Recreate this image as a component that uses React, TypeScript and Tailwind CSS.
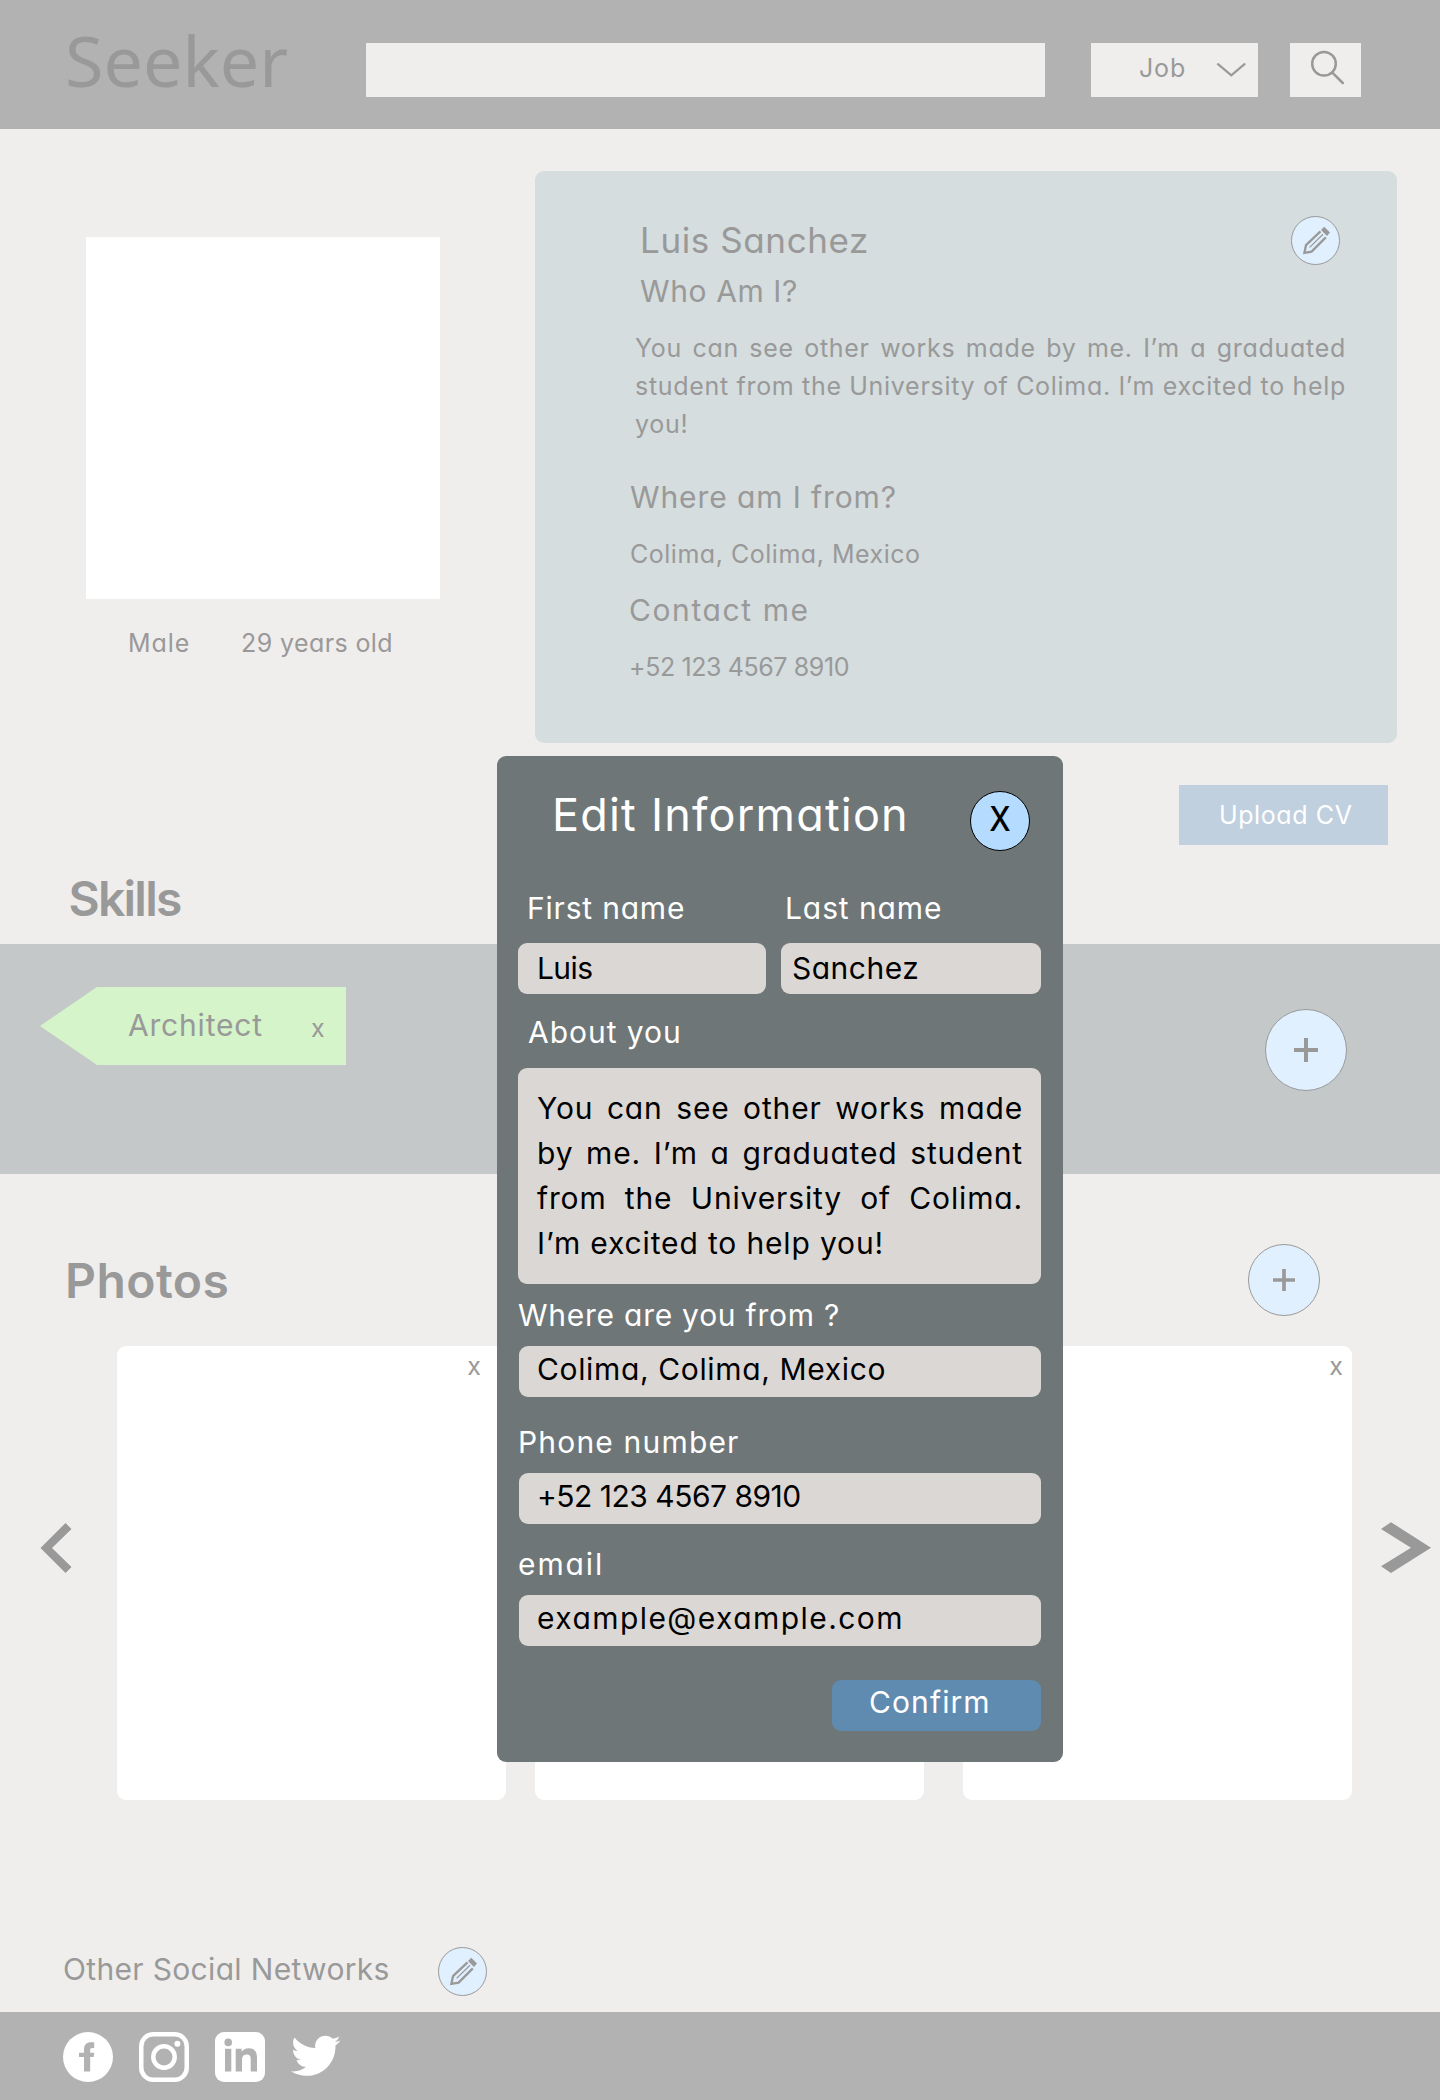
import type { ReactNode } from "react";
import { FaTwitter } from "react-icons/fa";

function Pencil() {
  return (
    <span className="flex size-[49px] shrink-0 items-center justify-center rounded-full border border-[#999999] bg-[#e0f0ff]">
      <svg width="49" height="49" viewBox="0 0 49 49" className="shrink-0" fill="none" stroke="#999999">
        <path d="M29.5 15.4 15 29.2 13.4 36.8 20.6 35.6 34.8 21.4" strokeWidth="2.3" />
        <path d="M18.6 31.4 32 18.2" strokeWidth="1.3" />
        <path d="M33.2 10.8 39 16.6 36 20 30 14Z" fill="#999999" stroke="none" />
      </svg>
    </span>
  );
}

function Plus({ size, className }: { size: number; className: string }) {
  return (
    <span className={`flex shrink-0 items-center justify-center rounded-full border border-[#999999] bg-[#e0f0ff] ${className}`}>
      <svg width={size} height={size} viewBox="0 0 24 24" stroke="#999999" strokeWidth="4" fill="none">
        <path d="M12 0V24M0 12H24" />
      </svg>
    </span>
  );
}

function Field({ className, children }: { className: string; children: ReactNode }) {
  return <div className={`h-[51px] rounded-[9px] bg-[#dbd7d4] leading-[45px] text-black ${className}`}>{children}</div>;
}

function Header() {
  return (
    <header className="flex h-[129px] items-start bg-[#b2b2b2]">
      <h1 className="ml-[65px] mt-3 w-[301px] font-['Noto_Sans'] text-[70px] leading-[96px]">Seeker</h1>
      <div className="mt-[43px] h-[54px] w-[679px] bg-[#f0eeec]" />
      <div className="ml-[46px] mt-[43px] flex h-[54px] w-[167px] bg-[#f0eeec]">
        <span className="ml-12 mt-1.5 w-[77px] text-[25px] leading-[38px] tracking-[0.85px]">Job</span>
        <svg width="30" height="16" viewBox="0 0 30 16" className="mt-[19px]" fill="none" stroke="#999999" strokeWidth="2.2" strokeLinecap="round">
          <path d="M2 2.2 15.3 13.4 28.5 2.2" />
        </svg>
      </div>
      <div className="ml-8 mt-[43px] h-[54px] w-[71px] bg-[#f0eeec]">
        <svg width="71" height="54" viewBox="0 0 71 54" fill="none" stroke="#999999" strokeWidth="2.5" strokeLinecap="round">
          <circle cx="34" cy="20.8" r="11.8" />
          <path d="M42.6 29.8 52.8 40" />
        </svg>
      </div>
    </header>
  );
}

function Profile() {
  return (
    <section className="flex h-[656px] items-start">
      <div className="ml-[86px] mt-[108px] w-[354px]">
        <div className="h-[362px] bg-white" />
        <div className="mt-[25px] flex whitespace-nowrap pl-[42px] text-[25px] leading-[38px]">
          <span className="w-[113px] tracking-[0.9px]">Male</span>
          <span className="tracking-[0.4px]">29 years old</span>
        </div>
      </div>
      <div className="ml-[95px] mt-[42px] flex h-[572px] w-[862px] rounded-[9px] bg-[#d5ddde] pt-[43px] text-[30px] leading-[45px]">
        <div className="ml-[94px] w-[717px]">
          <div className="flex h-[53px] justify-between">
            <h2 className="pl-[11px] text-[35px] leading-[52px] tracking-[0.6px]">Luis Sanchez</h2>
            <div className="mr-[6px] mt-[2px]"><Pencil /></div>
          </div>
          <h3 className="mt-[2px] pl-[11px] tracking-[0.6px]">Who Am I?</h3>
          <p className="ml-[6px] mt-[15px] w-[711px] text-justify text-[25px] leading-[38px] tracking-[0.7px] [word-spacing:-3px]">
            You can see other works made by me. I’m a graduated student from the University of Colima. I’m excited to help you!
          </p>
          <h3 className="mt-8 pl-px tracking-[0.9px]">Where am I from?</h3>
          <p className="mt-[15px] pl-px text-[25px] leading-[38px] tracking-[0.52px]">Colima, Colima, Mexico</p>
          <h3 className="mt-[15px] tracking-[1.6px]">Contact me</h3>
          <p className="mt-[15px] text-[25px] leading-[38px] tracking-[-0.4px]">+52 123 4567 8910</p>
        </div>
      </div>
    </section>
  );
}

function Skills() {
  return (
    <section>
      <div className="flex h-[159px] items-start justify-between">
        <h2 className="ml-[68.5px] mt-[78px] text-5xl font-semibold leading-[72px] tracking-[-1.75px]">Skills</h2>
        <button className="mr-[52px] flex h-[60px] w-[209px] items-start bg-[#c0d0df] pl-10 pt-[11px] text-[25px] leading-[38px] tracking-[0.6px] text-white">
          Upload CV
        </button>
      </div>
      <div className="flex h-[230px] items-start justify-between bg-[#c4c8c9] pl-10 pr-[93px]">
        <div className="mt-[43px] flex h-[78px] w-[306px] whitespace-nowrap bg-[#d5f4c9] pl-[88px] pt-4 [clip-path:polygon(0_50%,57px_0,100%_0,100%_100%,57px_100%)]">
          <span className="w-[183px] text-[30px] leading-[45px] tracking-[0.8px]">Architect</span>
          <span className="pt-[6px] text-[25px] leading-[38px]">x</span>
        </div>
        <Plus size={24} className="mt-[65px] size-[82px]" />
      </div>
    </section>
  );
}

function Photo({ className }: { className: string }) {
  return <div className={`h-[454px] w-[389px] rounded-[9px] bg-white text-right text-[25px] leading-[40px] ${className}`} />;
}

function ClosablePhoto({ className }: { className: string }) {
  return (
    <div className={`h-[454px] w-[389px] rounded-[9px] bg-white text-right text-[25px] leading-[40px] ${className}`}>
      x
    </div>
  );
}

function Photos() {
  return (
    <section className="h-[773px]">
      <div className="flex h-[172px] items-start justify-between pr-[120px]">
        <h2 className="ml-[65px] mt-[71px] text-5xl font-semibold leading-[72px] tracking-[0.44px]">Photos</h2>
        <Plus size={22} className="mt-[70px] size-[72px]" />
      </div>
      <div className="flex items-center">
        <svg width="117" height="60" viewBox="0 0 117 60" className="mb-[50px] shrink-0" fill="#999999">
          <path d="M40.5 30 65.5 5 71.5 11 52 30 71.5 49 65.5 55Z" />
        </svg>
        <ClosablePhoto className="pr-[25px]" />
        <Photo className="ml-[29px]" />
        <ClosablePhoto className="ml-[39px] pr-[9px]" />
        <svg width="88" height="60" viewBox="0 0 88 60" className="mb-[50px] shrink-0" fill="#999999">
          <path d="M29 11 39 4.2 79 29.7 39 55 29 48.3 59 29.7Z" />
        </svg>
      </div>
    </section>
  );
}

function Social() {
  return (
    <>
      <div className="flex h-[65px] items-start pl-[63px]">
        <h3 className="w-[375px] text-[30px] leading-[45px] tracking-[0.33px]">Other Social Networks</h3>
        <Pencil />
      </div>
      <footer className="flex h-[88px] items-start gap-[26px] bg-[#b2b2b2] pl-[63px] pt-5">
        <svg width="50" height="50" viewBox="0 0 50 50">
          <circle cx="25" cy="25" r="25" fill="#fff" />
          <path d="M21 39.5V25H16V20.7H21V17.7C21 12.4 23.6 10.2 28 10.2H31.2V16.1H29.2C27.6 16.1 27.2 16.9 27.2 18.5V20.7H31.2L30.6 25H27.2V39.5Z" fill="#b2b2b2" />
        </svg>
        <svg width="50" height="50" viewBox="0 0 50 50" fill="none" stroke="#fff" strokeWidth="4.5">
          <rect x="2.25" y="2.25" width="45.5" height="45.5" rx="12" />
          <circle cx="25" cy="25" r="10.7" />
          <circle cx="38.4" cy="11.7" r="3" fill="#fff" stroke="none" />
        </svg>
        <svg width="50" height="50" viewBox="0 0 50 50" fill="#b2b2b2">
          <rect width="50" height="50" rx="9" fill="#fff" />
          <circle cx="13.2" cy="10.4" r="3.8" />
          <path d="M10 16.8h6.3v22.8H10zM20.7 16.8h6v3c1.2-2 3.6-3.6 7-3.6 6.4 0 8.3 4.2 8.3 10v13.4h-6.3V27.8c0-2.8-.2-5.2-4-5.2-3.7 0-4.7 2.8-4.7 5.4v11.6h-6.3z" />
        </svg>
        <FaTwitter size={49.5} color="#fff" className="mt-[-1px]" />
      </footer>
    </>
  );
}

function EditDialog() {
  return (
    <div role="dialog" className="absolute left-[497px] top-[756px] h-[1006px] w-[566px] whitespace-nowrap rounded-[9px] bg-[#6e7677] pl-[21px] pr-[22px] pt-[25px] text-[30px] leading-[45px] text-white">
      <div className="flex h-[105px] items-start justify-between">
        <h2 className="ml-[34px] text-[45px] leading-[68px] tracking-[1.2px]">Edit Information</h2>
        <button className="mr-[11px] mt-[10px] flex size-[60px] justify-center rounded-full border border-black bg-[#b5dbff] text-[34px] font-medium leading-[54px] text-black">
          <span className="inline-block scale-x-[0.9]">X</span>
        </button>
      </div>
      <div className="flex">
        <label className="w-[266px] pl-[9px] tracking-[0.8px]">First name</label>
        <label className="pl-px tracking-[0.9px]">Last name</label>
      </div>
      <div className="mt-3 flex justify-between">
        <Field className="w-[248px] pl-[19px] pt-[3px] tracking-[-0.6px]">Luis</Field>
        <Field className="w-[260px] pl-[11px] pt-[3px] tracking-[0.5px]">Sanchez</Field>
      </div>
      <label className="mt-4 block pl-[10px] tracking-[0.96px]">About you</label>
      <div className="mt-[13px] h-[216px] whitespace-normal rounded-[9px] bg-[#dbd7d4] pl-[19px] pr-[18px] pt-[18px] text-justify tracking-[0.85px] text-black">
        You can see other works made by me. I’m a graduated student from the University of Colima. I’m excited to help you!
      </div>
      <label className="mt-[9px] block tracking-[0.75px]">Where are you from ?</label>
      <Field className="ml-px mt-2 pl-[18px] pt-px tracking-[0.64px]">Colima, Colima, Mexico</Field>
      <label className="mt-[23px] block tracking-[1.18px]">Phone number</label>
      <Field className="ml-px mt-2 pl-[18px] pt-px tracking-[-0.5px]">+52 123 4567 8910</Field>
      <label className="mt-[18px] block tracking-[1.9px]">email</label>
      <Field className="ml-px mt-2 pl-[18px] pt-px tracking-[1.44px]">example@example.com</Field>
      <button className="ml-auto mt-[34px] flex h-[51px] w-[209px] items-start rounded-[9px] bg-[#608bb0] pl-[37px] tracking-[1.1px]">
        Confirm
      </button>
    </div>
  );
}

export default function App() {
  return (
    <div className="relative h-[2100px] w-[1440px] overflow-hidden bg-[#f0eeec] font-['Inter',sans-serif] text-[#999999] [font-feature-settings:'cv11']">
      <Header />
      <Profile />
      <Skills />
      <Photos />
      <Social />
      <EditDialog />
    </div>
  );
}
